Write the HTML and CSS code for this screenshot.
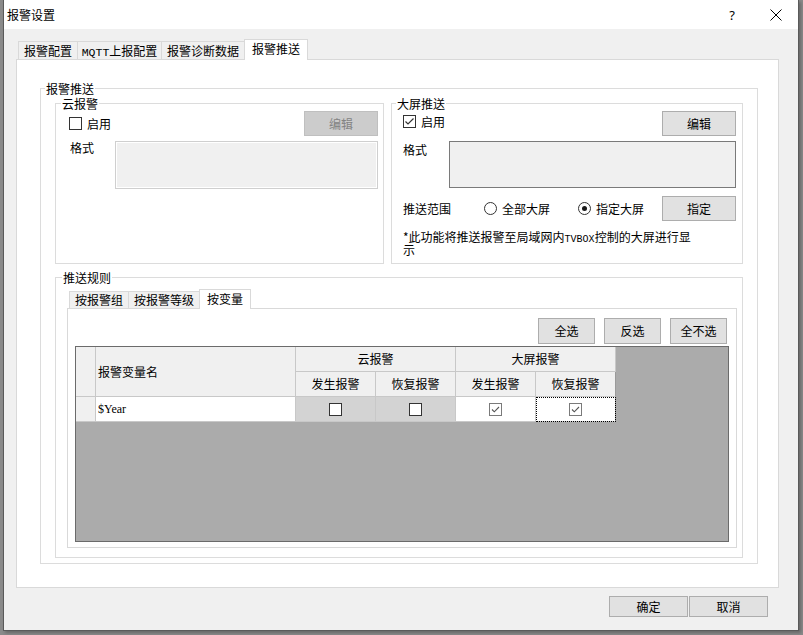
FILE: index.html
```html
<!DOCTYPE html>
<html>
<head>
<meta charset="utf-8">
<title>报警设置</title>
<link rel="stylesheet" href="styles.css">
</head>
<body>
<div class="window">
  <div class="titlebar">
    <span class="title">报警设置</span>
    <span class="help">?</span>
    <svg class="close" width="12" height="12" viewBox="0 0 12 12"><path d="M0.5 0.5 L11.5 11.5 M11.5 0.5 L0.5 11.5" stroke="#000" stroke-width="1" fill="none"/></svg>
  </div>
  <div class="client">
    <div class="tabctl main-tabs">
      <div class="tabstrip main-strip">
        <div class="tab mt1">报警配置</div>
        <div class="tab mt2"><span class="latin">MQTT</span>上报配置</div>
        <div class="tab mt3">报警诊断数据</div>
        <div class="tab active mt4">报警推送</div>
      </div>
      <div class="tabpage main-page">
        <fieldset class="group outer">
          <legend>报警推送</legend>
          <div class="outer-body">
            <div class="top-row">
              <fieldset class="group cloud">
                <legend>云报警</legend>
                <div class="cloud-body">
                  <div class="row-1">
                    <span class="check"><span class="cb"></span><span>启用</span></span>
                    <span class="btn btn-disabled btn-edit">编辑</span>
                  </div>
                  <div class="row-fmt">
                    <span class="fmt-label cloud-label">格式</span>
                    <span class="textbox tb-disabled cloud-tb"></span>
                  </div>
                </div>
              </fieldset>
              <fieldset class="group screen">
                <legend>大屏推送</legend>
                <div class="screen-body">
                  <div class="row-1">
                    <span class="check check-up"><span class="cb cb-dark"><svg width="11" height="11" viewBox="0 0 11 11"><path d="M1.5 5.5 L4 8 L9.5 2.5" stroke="#333" stroke-width="1.2" fill="none"/></svg></span><span>启用</span></span>
                    <span class="btn btn-edit">编辑</span>
                  </div>
                  <div class="row-fmt">
                    <span class="fmt-label screen-label">格式</span>
                    <span class="textbox screen-tb"></span>
                  </div>
                  <div class="row-range">
                    <span class="range-label">推送范围</span>
                    <span class="radio r-all"><span class="rb"></span><span>全部大屏</span></span>
                    <span class="radio r-some"><span class="rb on"></span><span>指定大屏</span></span>
                    <span class="btn btn-edit btn-assign">指定</span>
                  </div>
                  <div class="note">*此功能将推送报警至局域网内<span class="latin-note">TVBOX</span>控制的大屏进行显示</div>
                </div>
              </fieldset>
            </div>
            <fieldset class="group rules">
              <legend>推送规则</legend>
              <div class="rules-body">
                <div class="tabctl rule-tabs">
                  <div class="tabstrip rule-strip">
                    <div class="tab rt rt1">按报警组</div>
                    <div class="tab rt rt2">按报警等级</div>
                    <div class="tab rt active rt3">按变量</div>
                  </div>
                  <div class="tabpage rule-page">
                    <div class="sel-row">
                      <span class="btn btn-sel">全选</span>
                      <span class="btn btn-sel">反选</span>
                      <span class="btn btn-sel">全不选</span>
                    </div>
                    <div class="gridview">
                      <div class="grid">
                        <div class="gc gh corner"></div>
                        <div class="gc gh name-h">报警变量名</div>
                        <div class="gc gh grp-h cloud-h">云报警</div>
                        <div class="gc gh grp-h screen-h">大屏报警</div>
                        <div class="gc gh">发生报警</div>
                        <div class="gc gh">恢复报警</div>
                        <div class="gc gh">发生报警</div>
                        <div class="gc gh last">恢复报警</div>
                        <div class="gc gh rowhead"></div>
                        <div class="gc gd name">$Year</div>
                        <div class="gc gd ro"><span class="cb"></span></div>
                        <div class="gc gd ro"><span class="cb"></span></div>
                        <div class="gc gd"><span class="cb cb-light"><svg width="11" height="11" viewBox="0 0 11 11"><path d="M2 5.5 L4.3 7.8 L9 3" stroke="#555" stroke-width="1.1" fill="none"/></svg></span></div>
                        <div class="gc gd last focus"><span class="cb cb-light"><svg width="11" height="11" viewBox="0 0 11 11"><path d="M2 5.5 L4.3 7.8 L9 3" stroke="#555" stroke-width="1.1" fill="none"/></svg></span></div>
                      </div>
                    </div>
                  </div>
                </div>
              </div>
            </fieldset>
          </div>
        </fieldset>
      </div>
    </div>
    <div class="footer">
      <span class="btn btn-foot">确定</span>
      <span class="btn btn-foot">取消</span>
    </div>
  </div>
</div>
</body>
</html>
```

FILE: styles.css
```css
* { box-sizing: border-box; }
html, body { margin: 0; padding: 0; }
body {
  width: 803px;
  height: 635px;
  overflow: hidden;
  background: #8a8a8a;
  font-family: "Noto Sans CJK SC", "Noto Sans", sans-serif;
  font-size: 12px;
  color: #000;
}
.window {
  margin-left: 3px;
  width: 796px;
  height: 631px;
  background: #f0f0f0;
  border: 1px solid #5a5a5a;
  border-top: none;
  box-shadow: 2px 2px 3px rgba(0,0,0,0.25);
}
.titlebar {
  height: 29px;
  background: #fff;
  display: flex;
  align-items: center;
  padding: 0 16px 0 3px;
}
.title { flex: 1; line-height: 14px; }
.help {
  width: 12px;
  text-align: center;
  margin-right: 32px;
  font-family: "Noto Sans", sans-serif;
  font-size: 13px;
  line-height: 14px;
}
.close { display: block; }

.client { padding-top: 10px; }
.main-tabs { margin-left: 12px; width: 763px; }
.tabstrip { display: flex; align-items: flex-end; }
.main-strip { height: 20px; padding-left: 2px; }
.rule-strip { height: 19px; padding-left: 2px; }
.tab {
  background: #f0f0f0;
  border-top: 1px solid #d9d9d9;
  border-left: 1px solid #d9d9d9;
  text-align: center;
  white-space: nowrap;
}
.tab.active {
  background: #fff;
  border-right: 1px solid #d9d9d9;
  margin-bottom: -1px;
  position: relative;
  z-index: 1;
}
.mt1, .mt2, .mt3 { height: 18px; line-height: 17px; }
.mt1 { width: 59px; }
.mt2 { width: 84px; }
.mt3 { width: 83px; }
.mt4 { width: 64px; height: 21px; line-height: 18px; }
.latin { font-family: "Liberation Mono", monospace; font-size: 11.5px; line-height: 0; }

.tabpage { background: #fff; border: 1px solid #d9d9d9; }
.main-page { height: 529px; padding-top: 22px; padding-left: 23px; }

.group {
  margin: 0;
  padding: 0;
  min-width: 0;
  border: 1px solid #dcdcdc;
}
.group > legend {
  padding: 0 1px;
  margin-left: 5px;
  line-height: 13px;
  font-size: 12px;
}
.outer { width: 718px; }
.outer > legend { margin-left: 4px; }
.outer-body { padding: 2px 14px 5px 14px; }
.top-row { display: flex; gap: 7px; }
.cloud { width: 329px; height: 167px; }
.screen { width: 352px; height: 167px; }
.screen > legend { margin-left: 4px; }
.cloud-body { padding: 1px 5px 0 13px; }
.screen-body { padding: 1px 6px 0 11px; }
.row-1 {
  height: 25px;
  display: flex;
  align-items: center;
  justify-content: space-between;
}
.check { display: inline-flex; align-items: center; gap: 5px; line-height: 14px; }
.check-up { margin-top: -4px; }
.cb {
  width: 13px;
  height: 13px;
  border: 1px solid #333;
  background: #fff;
  display: inline-flex;
  align-items: center;
  justify-content: center;
  flex: none;
}
.cb svg { display: block; }
.cb-light { border-color: #7a7a7a; }
.btn {
  display: inline-flex;
  align-items: center;
  justify-content: center;
  background: #e1e1e1;
  border: 1px solid #adadad;
  line-height: 14px;
  white-space: nowrap;
}
.btn-edit { width: 74px; height: 25px; }
.btn-disabled { background: #cccccc; border-color: #bfbfbf; color: #838383; }
.row-fmt { display: flex; margin-top: 5px; }
.fmt-label { line-height: 14px; }
.cloud-label { width: 46px; padding-left: 1px; }
.screen-label { width: 46px; padding-top: 2px; }
.textbox { display: block; background: #f0f0f0; border: 1px solid #7a7a7a; }
.tb-disabled { border-color: #cfcfcf; box-shadow: inset 0 0 0 1px #fff; }
.cloud-tb { width: 263px; height: 48px; }
.screen-tb { width: 287px; height: 47px; }
.row-range {
  display: flex;
  align-items: center;
  height: 25px;
  margin-top: 8px;
}
.range-label { width: 81px; line-height: 14px; }
.radio { display: inline-flex; align-items: center; gap: 5px; line-height: 14px; }
.r-all { width: 94px; }
.rb {
  width: 13px;
  height: 13px;
  border: 1px solid #333;
  border-radius: 50%;
  background: #fff;
  display: inline-flex;
  align-items: center;
  justify-content: center;
}
.rb.on::after {
  content: "";
  width: 5px;
  height: 5px;
  border-radius: 50%;
  background: #1a1a1a;
}
.btn-assign { margin-left: auto; }
.note { width: 296px; margin-top: 9px; line-height: 13px; }
.latin-note { font-family: "Liberation Mono", monospace; font-size: 10px; line-height: 0; }

.rules { width: 688px; height: 287px; margin-top: 7px; }
.rules > legend { margin-left: 6px; }
.rules-body { padding: 5px 0 0 11px; }
.rule-tabs { width: 670px; }
.rt { height: 17px; line-height: 16px; }
.rt1 { width: 59px; }
.rt2 { width: 71px; }
.rt3 { width: 52px; height: 20px; line-height: 17px; }
.rule-page { height: 240px; padding: 9px 9px 0 7px; }
.sel-row { display: flex; justify-content: flex-end; gap: 9px; height: 26px; }
.btn-sel { width: 57px; height: 26px; }
.gridview {
  margin-top: 2px;
  width: 654px;
  height: 196px;
  background: #ababab;
  border: 1px solid #6b6b6b;
}
.grid {
  display: grid;
  grid-template-columns: 20px 200px 80px 80px 80px 80px;
  grid-template-rows: 25px 25px 25px;
  width: 540px;
}
.gc {
  border-right: 1px solid #c8c8c8;
  border-bottom: 1px solid #c8c8c8;
  display: flex;
  align-items: center;
  justify-content: center;
  line-height: 14px;
  white-space: nowrap;
}
.gh { background: #f0f0f0; }
.corner { grid-row: 1 / span 2; }
.name-h { grid-row: 1 / span 2; justify-content: flex-start; padding-left: 2px; }
.grp-h { grid-column: span 2; }
.last { border-right-color: #9a9a9a; }
.gd { background: #fff; }
.gd.ro { background: #d3d3d3; }
.rowhead { background: #f0f0f0; }
.name {
  justify-content: flex-start;
  padding-left: 2px;
  font-family: "Liberation Serif", serif;
  font-size: 12px;
}
.focus { outline: 1px dotted #000; outline-offset: -1px; }

.footer {
  display: flex;
  justify-content: flex-end;
  gap: 1px;
  margin-top: 8px;
  padding-right: 30px;
}
.btn-foot { width: 79px; height: 21px; }
```
